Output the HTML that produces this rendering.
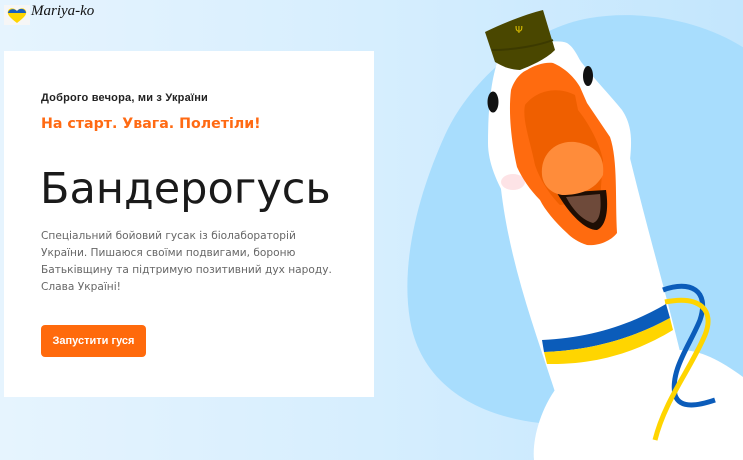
<!DOCTYPE html>
<html><head><meta charset="utf-8"><style>
html,body{margin:0;padding:0}
body{width:743px;height:460px;overflow:hidden;position:relative;background:linear-gradient(90deg,#e6f4fe 0%,#d6eefe 50%,#c3e6fd 100%);font-family:"DejaVu Sans",sans-serif}
svg.bg{position:absolute;left:0;top:0}
.logo{position:absolute;left:4px;top:5px;width:26px;height:20px;background:#f6f6f6}
.logotxt{position:absolute;left:31px;top:3px;font-family:"Liberation Serif",serif;font-style:italic;font-size:15px;color:#111}
.card{position:absolute;left:4px;top:51px;width:370px;height:346px;background:#fff}
.t1{position:absolute;left:41px;top:92px;font-size:11px;font-weight:bold;color:#222;font-family:"Liberation Sans",sans-serif;letter-spacing:.2px}
.t2{position:absolute;left:41px;top:116px;font-size:14.2px;font-weight:bold;color:#ff6a13}
.t3{position:absolute;left:40px;top:164px;font-size:43px;color:#1a1a1a}
.t4{position:absolute;left:41px;top:228px;font-size:10.6px;line-height:17px;color:#666;width:292px}
.btn{position:absolute;left:41px;top:325px;width:105px;height:32px;background:#ff6a0c;border-radius:4px;color:#fff;font-size:11px;font-weight:bold;line-height:32px;text-align:center;font-family:"Liberation Sans",sans-serif}
</style></head><body>
<svg class="bg" width="743" height="460" viewBox="0 0 743 460">
<path d="M760 60 C720 25 650 8 590 18 C530 28 470 80 445 135 C420 190 400 260 410 320 C420 380 470 415 540 423 C620 430 700 420 760 400 Z" fill="#a8ddfd"/>
<path d="M557 387 C540 410 532 440 534 460 L743 460 L743 377 C720 360 700 350 680 350 Z" fill="#fff"/>
<path d="M500 180 C508 260 535 330 556 395 L682 360 C668 300 650 240 628 150 Z" fill="#fff"/>
<path d="M497 63 C520 45 555 38 567 43 C575 48 578 58 582 63 C595 80 610 95 622 110 C632 125 632 140 630 160 L620 230 L525 225 C505 200 488 170 488 143 C488 115 490 85 497 63 Z" fill="#fff"/>
<ellipse cx="513" cy="182" rx="12" ry="8" fill="#fde3e6"/>
<ellipse cx="493" cy="102" rx="5.5" ry="10.5" fill="#111"/>
<ellipse cx="588" cy="76" rx="5" ry="10" fill="#111"/>
<path d="M485 32 C505 22 530 13 543 10 L555 50 C545 60 530 66 520 70 C510 70 502 66 495 62 Z" fill="#4a4700"/>
<path d="M492 50 C515 50 540 45 553 40" stroke="#3c3a00" stroke-width="2" fill="none"/>
<text x="515" y="33" font-size="10" fill="#e0c200" font-family="DejaVu Sans">Ψ</text>
<path d="M511 90 C515 78 522 72 527 70 C535 65 545 62 553 63 C565 68 575 78 580 87 L587 103 L610 137 C618 160 615 200 617 233 C610 242 597 246 587 245 C578 242 572 238 567 233 C555 222 545 210 540 200 C530 190 522 178 517 167 C512 145 508 115 511 90 Z" fill="#ff6b0f"/>
<path d="M525 105 C535 92 555 85 575 95 L578 110 C590 125 600 145 603 160 L600 200 L560 205 C550 195 540 180 535 165 C530 140 522 120 525 105 Z" fill="#ef5f00"/>
<path d="M557 193 L606 190 C609 210 606 226 597 230 C585 230 570 215 557 193 Z" fill="#1e0e04"/>
<path d="M566 197 L600 194 C602 212 599 221 593 223 C582 220 573 210 566 197 Z" fill="#6e4a3a"/>
<path d="M542 175 C540 155 555 140 575 142 C595 145 605 155 603 175 C595 190 580 195 562 195 C550 193 543 185 542 175 Z" fill="#ff8c3a"/>
<path d="M663 290 C690 280 710 290 700 320 C690 345 670 370 675 395 C680 410 700 405 715 400" stroke="#0b5cba" stroke-width="5" fill="none"/>
<path d="M665 302 C700 295 715 310 705 335 C690 370 665 400 655 440" stroke="#ffd500" stroke-width="5" fill="none"/>
<path d="M542 340 C590 338 630 325 666 304 L670 318 C635 337 595 350 544 352 Z" fill="#0b5cba"/>
<path d="M544 352 C595 350 635 337 670 318 L673 330 C640 350 600 365 547 364 Z" fill="#ffd500"/>
</svg>
<div class="logo"><svg width="26" height="20" viewBox="0 0 26 20"><path d="M13 18 C5 12 3 9 4 6 C5 3 10 2 13 6 C16 2 21 3 22 6 C23 9 21 12 13 18Z" fill="#ffd500"/><path d="M4 8 C4 5 9 2 13 6 C16 2 22 4 22 8 Z" fill="#1a5fbf"/></svg></div>
<div class="logotxt">Mariya-ko</div>
<div class="card"></div>
<div class="t1">Доброго вечора, ми з України</div>
<div class="t2">На старт. Увага. Полетіли!</div>
<div class="t3">Бандерогусь</div>
<div class="t4">Спеціальний бойовий гусак із біолабораторій України. Пишаюся своїми подвигами, бороню Батьківщину та підтримую позитивний дух народу. Слава Україні!</div>
<div class="btn">Запустити гуся</div>
</body></html>
